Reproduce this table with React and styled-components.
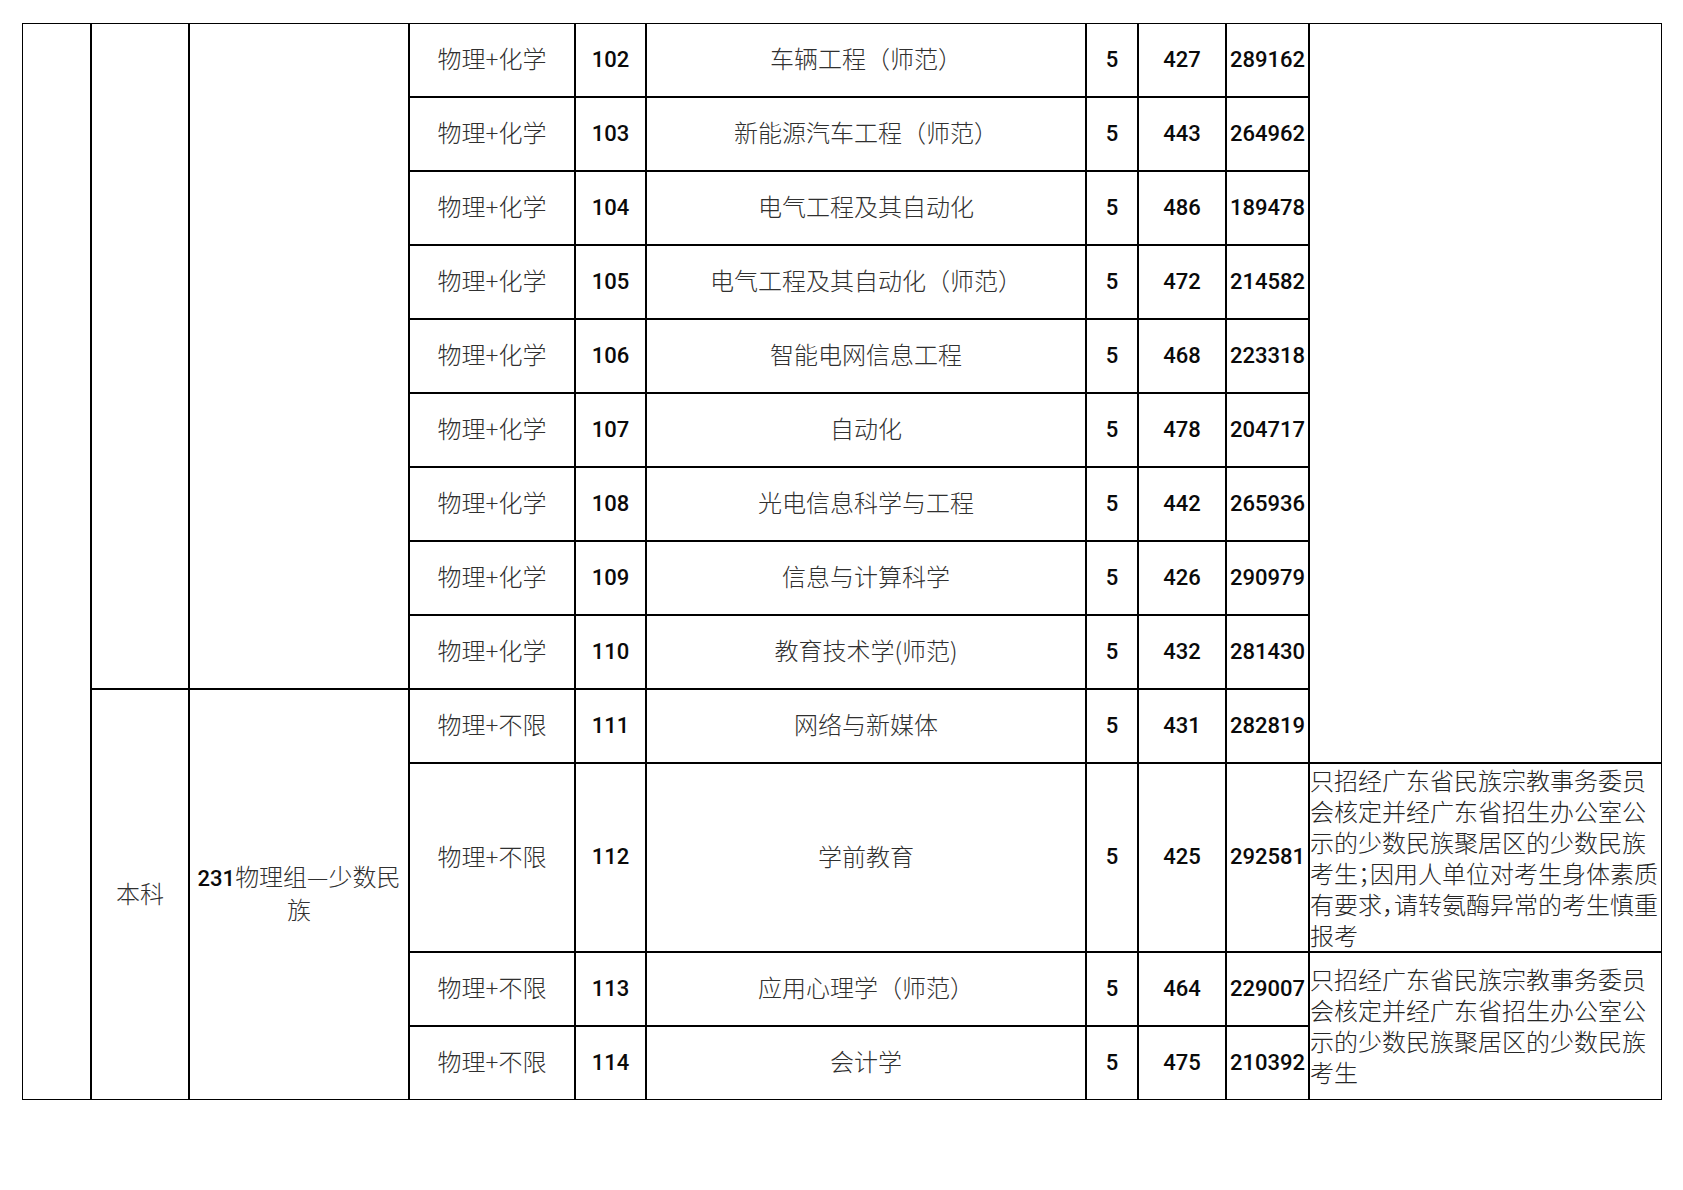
import React from "react";
import styled, { createGlobalStyle } from "styled-components";

const Global = createGlobalStyle`
  html, body { margin: 0; padding: 0; background: #fff; }
  body { font-family: "Noto Sans CJK SC", "Noto Sans", sans-serif; }
`;

const Page = styled.div`
  width: 1683px;
  height: 1190px;
  padding: 23px 0 0 22px;
  box-sizing: border-box;
  background: #fff;
`;

const Sheet = styled.div`
  display: inline-grid;
  grid-template-columns: 67px 96px 218px 164px 69px 438px 50px 86px 81px 351px;
  grid-template-rows: repeat(10, 72px) 187px 72px 72px;
  gap: 2px;
  padding: 1px;
  background: #000;
`;

const Cell = styled.div`
  background: #fff;
  display: flex;
  align-items: center;
  justify-content: center;
  text-align: center;
  box-sizing: border-box;
  overflow: visible;
  min-width: 0;
  grid-column: ${(p) => p.$col};
  grid-row: ${(p) => p.$row};
`;

const Cjk = styled(Cell)`
  font-family: "Noto Sans CJK SC", sans-serif;
  font-weight: 300;
  font-size: 24px;
  line-height: 30px;
  color: #303030;
  padding-bottom: 4px;
`;

const Digits = styled.span`
  font-family: Roboto, "Liberation Sans", sans-serif;
  font-weight: 500;
  font-size: 22px;
  color: #0a0a0a;
`;

const Num = styled(Cell)`
  font-family: Roboto, "Liberation Sans", sans-serif;
  font-weight: 500;
  font-size: 22px;
  color: #0a0a0a;
  white-space: nowrap;
  padding-bottom: 2px;
`;

const Note = styled(Cell)`
  justify-content: flex-start;
  text-align: left;
  font-family: "Noto Sans CJK SC", sans-serif;
  font-weight: 300;
  font-size: 24px;
  line-height: 31px;
  color: #262626;
  font-feature-settings: "halt";
  padding-bottom: 2px;
`;

const NoteText = styled.div`
  white-space: nowrap;
`;

const NoteLine = styled.div`
  height: 31px;
`;

const rows = [
  ["物理+化学", "102", "车辆工程（师范）", "5", "427", "289162"],
  ["物理+化学", "103", "新能源汽车工程（师范）", "5", "443", "264962"],
  ["物理+化学", "104", "电气工程及其自动化", "5", "486", "189478"],
  ["物理+化学", "105", "电气工程及其自动化（师范）", "5", "472", "214582"],
  ["物理+化学", "106", "智能电网信息工程", "5", "468", "223318"],
  ["物理+化学", "107", "自动化", "5", "478", "204717"],
  ["物理+化学", "108", "光电信息科学与工程", "5", "442", "265936"],
  ["物理+化学", "109", "信息与计算科学", "5", "426", "290979"],
  ["物理+化学", "110", "教育技术学(师范)", "5", "432", "281430"],
  ["物理+不限", "111", "网络与新媒体", "5", "431", "282819"],
  ["物理+不限", "112", "学前教育", "5", "425", "292581"],
  ["物理+不限", "113", "应用心理学（师范）", "5", "464", "229007"],
  ["物理+不限", "114", "会计学", "5", "475", "210392"],
];

const note1 = [
  "只招经广东省民族宗教事务委员",
  "会核定并经广东省招生办公室公",
  "示的少数民族聚居区的少数民族",
  "考生；因用人单位对考生身体素质",
  "有要求，请转氨酶异常的考生慎重",
  "报考",
];

const note2 = [
  "只招经广东省民族宗教事务委员",
  "会核定并经广东省招生办公室公",
  "示的少数民族聚居区的少数民族",
  "考生",
];

export default function App() {
  return (
    <Page>
      <Global />
      <Sheet>
        <Cell $col="1" $row="1 / span 13" />
        <Cell $col="2" $row="1 / span 9" />
        <Cell $col="3" $row="1 / span 9" />
        <Cjk $col="2" $row="10 / span 4">本科</Cjk>
        <Cjk $col="3" $row="10 / span 4">
          <span>
            <Digits>231</Digits>物理组—少数民族
          </span>
        </Cjk>
        {rows.map((r, i) => (
          <React.Fragment key={r[1]}>
            <Cjk $col="4" $row={`${i + 1}`}>{r[0]}</Cjk>
            <Num $col="5" $row={`${i + 1}`}>{r[1]}</Num>
            <Cjk $col="6" $row={`${i + 1}`}>{r[2]}</Cjk>
            <Num $col="7" $row={`${i + 1}`}>{r[3]}</Num>
            <Num $col="8" $row={`${i + 1}`}>{r[4]}</Num>
            <Num $col="9" $row={`${i + 1}`}>{r[5]}</Num>
          </React.Fragment>
        ))}
        <Cell $col="10" $row="1 / span 10" />
        <Note $col="10" $row="11">
          <NoteText>
            {note1.map((l) => (
              <NoteLine key={l}>{l}</NoteLine>
            ))}
          </NoteText>
        </Note>
        <Note $col="10" $row="12 / span 2">
          <NoteText>
            {note2.map((l) => (
              <NoteLine key={l}>{l}</NoteLine>
            ))}
          </NoteText>
        </Note>
      </Sheet>
    </Page>
  );
}
